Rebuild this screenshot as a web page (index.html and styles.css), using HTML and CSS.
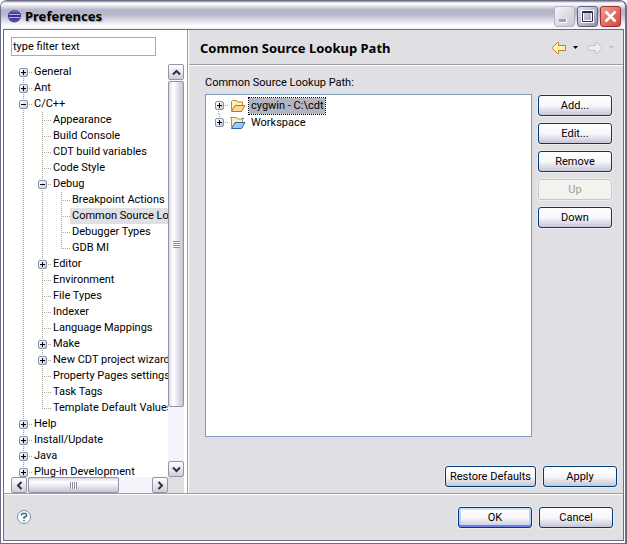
FILE: index.html
```html
<!DOCTYPE html>
<html lang="en">
<head>
<meta charset="utf-8">
<title>Preferences</title>
<link rel="stylesheet" href="styles.css">
</head>
<body>
<main class="window">
  <header class="titlebar">
    <svg class="logo" width="14" height="14" viewBox="0 0 14 14" aria-hidden="true">
      <defs><linearGradient id="orb" x1="0" y1="0" x2="0" y2="1"><stop offset="0" stop-color="#8a86cc"/><stop offset=".4" stop-color="#2c2a80"/><stop offset="1" stop-color="#5654b4"/></linearGradient></defs>
      <circle cx="6" cy="7" r="6" fill="#d8a8d4"/>
      <circle cx="7.500" cy="7" r="6.500" fill="url(#orb)"/>
      <path d="M2 5.500h11M2 8.500h11" stroke="#b4b4e4"/>
      <path d="M1 7h13" stroke="#3a3890"/>
    </svg>
    <h1 class="caption">Preferences</h1>
    <div class="window-buttons">
      <button class="win minimize" aria-label="Minimize" disabled><svg width="19" height="19" viewBox="0 0 19 19"><path d="M4 12h8v4H4z" fill="#fff"/><path d="M4 12h7v3H4z" fill="#a0a0b0"/></svg></button>
      <button class="win maximize" aria-label="Maximize"><svg width="19" height="19" viewBox="0 0 19 19"><path d="M4.500 4.500h10v10h-10z" fill="none" stroke="#fff" stroke-width="3"/><path d="M4.500 4.500h10v10h-10zM4 5.500h11" fill="none" stroke="#2c2c4c"/></svg></button>
      <button class="win close" aria-label="Close"><svg width="19" height="19" viewBox="0 0 19 19"><path d="M4.500 4.500l10 10M14.500 4.500l-10 10" stroke="#fff" stroke-width="2.500"/></svg></button>
    </div>
  </header>
  <div class="content">
    <aside class="sidebar">
      <input class="filter" type="text" value="type filter text" aria-label="Filter">
      <div class="tree-frame">
        <div class="tree-view">
          <ul class="tree">
            <li><button class="box plus" aria-label="Expand"></button><span class="item">General</span></li>
            <li><button class="box plus" aria-label="Expand"></button><span class="item">Ant</span></li>
            <li><button class="box" aria-label="Collapse"></button><span class="item">C/C++</span>
              <ul>
                <li><span class="item">Appearance</span></li>
                <li><span class="item">Build Console</span></li>
                <li><span class="item">CDT build variables</span></li>
                <li><span class="item">Code Style</span></li>
                <li><button class="box" aria-label="Collapse"></button><span class="item">Debug</span>
                  <ul>
                    <li><span class="item">Breakpoint Actions</span></li>
                    <li><span class="item current">Common Source Lookup Path</span></li>
                    <li><span class="item">Debugger Types</span></li>
                    <li><span class="item">GDB MI</span></li>
                  </ul>
                </li>
                <li><button class="box plus" aria-label="Expand"></button><span class="item">Editor</span></li>
                <li><span class="item">Environment</span></li>
                <li><span class="item">File Types</span></li>
                <li><span class="item">Indexer</span></li>
                <li><span class="item">Language Mappings</span></li>
                <li><button class="box plus" aria-label="Expand"></button><span class="item">Make</span></li>
                <li><button class="box plus" aria-label="Expand"></button><span class="item">New CDT project wizard</span></li>
                <li><span class="item">Property Pages settings</span></li>
                <li><span class="item">Task Tags</span></li>
                <li><span class="item">Template Default Values</span></li>
              </ul>
            </li>
            <li><button class="box plus" aria-label="Expand"></button><span class="item">Help</span></li>
            <li><button class="box plus" aria-label="Expand"></button><span class="item">Install/Update</span></li>
            <li><button class="box plus" aria-label="Expand"></button><span class="item">Java</span></li>
            <li><button class="box plus" aria-label="Expand"></button><span class="item">Plug-in Development</span></li>
          </ul>
        </div>
        <div class="scroll vertical">
          <button class="arrow" aria-label="Scroll up"><svg width="9" height="7" viewBox="0 0 9 7"><path d="M1 5.500l3.500-3.500l3.500 3.500"/></svg></button>
          <div class="thumb"><span class="grip"></span></div>
          <button class="arrow end" aria-label="Scroll down"><svg width="9" height="7" viewBox="0 0 9 7"><path d="M1 1.500l3.500 3.500l3.500-3.500"/></svg></button>
        </div>
        <div class="scroll horizontal">
          <button class="arrow" aria-label="Scroll left"><svg width="7" height="9" viewBox="0 0 7 9"><path d="M5.500 1l-3.500 3.500l3.500 3.500"/></svg></button>
          <div class="thumb"><span class="grip"></span></div>
          <button class="arrow end" aria-label="Scroll right"><svg width="7" height="9" viewBox="0 0 7 9"><path d="M1.500 1l3.500 3.500l-3.500 3.500"/></svg></button>
        </div>
        <div class="corner"></div>
      </div>
    </aside>
    <section class="page">
      <div class="page-head">
        <h2 class="page-title">Common Source Lookup Path</h2>
        <nav class="history">
          <button class="nav" aria-label="Back"><svg width="14" height="12" viewBox="0 0 14 12"><path d="M6.500 .500v3h7v5h-7v3h-1L.500 6.500v-1l5-5z" fill="#fff0b4" stroke="#c08420"/></svg></button>
          <button class="nav drop" aria-label="Back history"><svg width="5" height="3" viewBox="0 0 5 3"><path d="M0 0h5L2.500 3z"/></svg></button>
          <button class="nav" aria-label="Forward" disabled><svg width="14" height="12" viewBox="0 0 14 12"><path d="M7.500 .500v3h-7v5h7v3h1l5-5v-1l-5-5z" fill="#eeeeea" stroke="#c4c4bc"/></svg></button>
          <button class="nav" aria-label="Forward history" disabled><svg width="5" height="3" viewBox="0 0 5 3"><path d="M0 0h5L2.500 3z" fill="#c0c0b8"/></svg></button>
        </nav>
      </div>
      <div class="page-body">
        <p class="label" id="paths">Common Source Lookup Path:</p>
        <div class="lookup">
          <div class="list" aria-labelledby="paths">
            <ul class="tree sources">
              <li><button class="box plus" aria-label="Expand"></button><svg class="folder" width="16" height="14" viewBox="0 0 16 14"><path d="M1.500 11.500v-9l1-1h4l1 1.500h5v3" fill="#fff0b8" stroke="#c08830"/><path d="M1.500 12.500l3.500-6h10l-3.500 6z" fill="#fcd890" stroke="#b87820"/></svg><span class="item chosen">cygwin - C:\cdt</span></li>
              <li><button class="box plus" aria-label="Expand"></button><svg class="folder" width="16" height="14" viewBox="0 0 16 14"><path d="M.500 1.500h3M12 2.500h2" stroke="#4c74b0"/><path d="M1.500 11.500v-9l1-1h4l1 1.500h5v3" fill="#fff0b8" stroke="#b89040"/><path d="M1.500 12.500l3.500-6h10l-3.500 6z" fill="#a0c8f8" stroke="#3464a8"/></svg><span class="item">Workspace</span></li>
            </ul>
          </div>
          <div class="actions">
            <button class="btn">Add...</button>
            <button class="btn">Edit...</button>
            <button class="btn">Remove</button>
            <button class="btn" disabled>Up</button>
            <button class="btn">Down</button>
          </div>
        </div>
        <div class="page-foot">
          <button class="btn wide">Restore Defaults</button>
          <button class="btn">Apply</button>
        </div>
      </div>
    </section>
  </div>
  <footer class="footer">
    <button class="help" aria-label="Help"><svg width="16" height="16" viewBox="0 0 16 16"><circle cx="8" cy="8" r="6.500" fill="#fff" stroke="#7890a8"/><path d="M5.500 6.500V5.500l1-1h3l1 1v1.500L8 8.500V10M8 11v1.500" fill="none" stroke="#3c6890" stroke-width="1.500"/></svg></button>
    <button class="btn default">OK</button>
    <button class="btn">Cancel</button>
  </footer>
</main>
</body>
</html>
```

FILE: styles.css
```css
* { box-sizing: border-box; }

body {
  margin: 0;
  background: #fff;
  color: #000;
  font: 11px/16px Roboto, Tahoma, sans-serif;
}

button, input { font: inherit; color: inherit; }
button { padding: 0; border: 0; background: none; }
svg { display: block; }
ul { margin: 0; padding: 0; list-style: none; }
h1, h2, p { margin: 0; }

.window {
  display: flex;
  flex-direction: column;
  height: 100vh;
  border: 1px solid #6c6c86;
  border-right-width: 2px;
  border-radius: 7px 7px 0 0;
  background: #fff;
  overflow: hidden;
}

.titlebar {
  display: flex;
  align-items: center;
  flex: none;
  height: 28px;
  padding: 2px 4px 0 6px;
  background: linear-gradient(#82829e, #fff 2px, #f0f0f6 4px, #b4b4ca 9px, #b8b8cc 13px, #d8d8e4 19px, #fff 25px, #f0f0f6);
}
.caption {
  flex: 1;
  margin-left: 4px;
  font: bold 13px/16px "Noto Sans", Tahoma, sans-serif;
  text-shadow: 1px 1px 1px #9c9cac;
}
.window-buttons { display: flex; gap: 2px; }
.win {
  width: 21px;
  height: 21px;
  border: 1px solid #62627e;
  border-radius: 3px;
}
.minimize { border-color: #b4b4c4; background: linear-gradient(135deg, #f4f4f8, #c8c8d4); }
.maximize { background: linear-gradient(135deg, #e4e4f0, #9090b0); }
.close { border-color: #a03030; background: linear-gradient(135deg, #f0a090, #d04444); }

.content {
  display: flex;
  flex: 1;
  min-height: 0;
  margin: 0 1px 0 2px;
  border: solid #6c6c86;
  border-width: 1px 1px 0;
  background: #e0dfe3;
}

.sidebar {
  display: flex;
  flex-direction: column;
  flex: none;
  width: 184px;
  padding: 7px 3px 0 7px;
  border-right: 1px solid #9d9da1;
  background: #fff;
}
.filter {
  width: 145px;
  height: 19px;
  padding: 0 1px;
  border: 1px solid #a5acb2;
  background: #fff;
}
.tree-frame {
  display: grid;
  grid-template: minmax(0, 1fr) 16px / minmax(0, 1fr) 16px;
  flex: 1;
  min-height: 0;
  margin-top: 8px;
}
.tree-view { overflow: hidden; }

.tree li {
  position: relative;
  background: repeating-linear-gradient(#aca899 0 1px, transparent 1px 2px) 12px 0 / 1px 100% no-repeat;
  white-space: nowrap;
}
.tree ul li:last-child,
.sources li:last-child { background-size: 1px 8px; }
.tree > li:first-child { background-position: 12px 8px; }
.tree li::before {
  content: "";
  position: absolute;
  top: 8px;
  left: 12px;
  width: 9px;
  height: 1px;
  background: repeating-linear-gradient(90deg, #aca899 0 1px, transparent 1px 2px);
}
.tree ul { padding-left: 19px; }
.item { display: inline-block; height: 16px; margin-left: 21px; padding: 0 2px; vertical-align: top; }
.current { background: #e0dfe3; }
.box {
  position: absolute;
  top: 4px;
  left: 8px;
  width: 9px;
  height: 9px;
  border: 1px solid #8494b0;
  border-radius: 2px;
  background:
    linear-gradient(#000, #000) center / 5px 1px no-repeat,
    linear-gradient(135deg, #fff, #c8c8d4);
}
.plus {
  background:
    linear-gradient(#000, #000) center / 5px 1px no-repeat,
    linear-gradient(#000, #000) center / 1px 5px no-repeat,
    linear-gradient(135deg, #fff, #c8c8d4);
}

.scroll { display: flex; background: #f4f4fa; }
.vertical { flex-direction: column; }
.arrow {
  display: grid;
  place-items: center;
  flex: none;
  width: 16px;
  height: 16px;
  border: 1px solid #9494a8;
  border-radius: 2px;
  background: linear-gradient(#fff, #ceceda);
}
.arrow path { fill: none; stroke: #303038; stroke-width: 2; }
.arrow.end { margin-top: auto; }
.horizontal .end { margin: 0 0 0 auto; }
.thumb {
  display: grid;
  place-items: center;
  border: 1px solid #9494a8;
  border-radius: 2px;
}
.vertical .thumb { flex: 0 1 326px; width: 16px; margin-top: 1px; background: linear-gradient(90deg, #d8d8e4, #fff 30%, #c4c4d4); }
.horizontal .thumb { flex: 0 0 91px; margin-left: 1px; background: linear-gradient(#d8d8e4, #fff 30%, #c4c4d4); }
.grip { width: 7px; height: 7px; background: repeating-linear-gradient(#8c8c9c 0 1px, #fff 1px 2px); }
.horizontal .grip { background: repeating-linear-gradient(90deg, #8c8c9c 0 1px, #fff 1px 2px); }
.corner { background: #e0dfe3; }

.page {
  display: flex;
  flex-direction: column;
  flex: 1;
  min-width: 0;
  border-left: 1px solid #fff;
}
.page-head {
  display: flex;
  align-items: center;
  flex: none;
  height: 36px;
  padding: 0 9px 0 11px;
  border-bottom: 1px solid #fff;
  box-shadow: inset 0 -1px #9d9da1;
}
.page-title { flex: 1; font: bold 13px/16px "Noto Sans", Tahoma, sans-serif; }
.history { display: flex; align-items: center; gap: 7px; }
.history .drop { margin-right: 3px; }
.page-body {
  display: flex;
  flex-direction: column;
  flex: 1;
  min-height: 0;
  padding: 9px 6px 6px 16px;
}
.lookup { display: flex; flex: 1; gap: 6px; margin-top: 3px; padding-right: 5px; }
.list {
  flex: 1;
  padding: 2px 0;
  border: 1px solid #7f9db9;
  background: #fff;
}
.sources li { display: flex; align-items: center; height: 17px; background-position: 13px 0; }
.sources li::before { left: 13px; }
.sources .box { left: 9px; }
.folder { margin-left: 24px; }
.sources .item { margin-left: 3px; }
.chosen { outline: 1px dotted #000; background: #b2b4bf; }

.actions { display: flex; flex-direction: column; gap: 7px; padding-top: 1px; }
.btn {
  min-width: 74px;
  height: 21px;
  border: 1px solid #003c74;
  border-radius: 3px;
  background: linear-gradient(#fff, #f8f8fc 50%, #c6c5d7);
  box-shadow: 0 0 0 1px #ecebee;
  line-height: 19px;
}
.btn:disabled { border-color: #c9c7ba; background: #f2f2ee; color: #a1a192; }
.wide { min-width: 91px; }
.default { box-shadow: 0 0 0 1px #ecebee, inset 0 2px #cee0ff, inset 0 -2px #6982ee, inset 2px 0 #bcd0fa, inset -2px 0 #bcd0fa; }
.page-foot { display: flex; justify-content: flex-end; gap: 7px; margin-top: 29px; }

.footer {
  display: flex;
  align-items: center;
  flex: none;
  gap: 7px;
  height: 48px;
  margin: 0 1px 2px 2px;
  padding: 0 10px 0 12px;
  border: 1px solid #6c6c86;
  border-top-color: #9d9da1;
  background: #e0dfe3;
  box-shadow: inset 0 1px #fff;
}
.help { margin-right: auto; }
```
